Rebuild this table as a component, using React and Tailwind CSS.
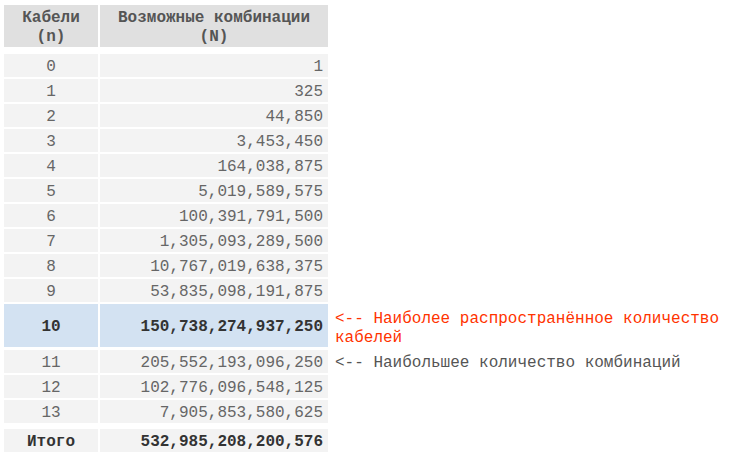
import React from "react";

const rows = [
  ["0", "1"],
  ["1", "325"],
  ["2", "44,850"],
  ["3", "3,453,450"],
  ["4", "164,038,875"],
  ["5", "5,019,589,575"],
  ["6", "100,391,791,500"],
  ["7", "1,305,093,289,500"],
  ["8", "10,767,019,638,375"],
  ["9", "53,835,098,191,875"],
  ["10", "150,738,274,937,250", "hl"],
  ["11", "205,552,193,096,250", "max"],
  ["12", "102,776,096,548,125"],
  ["13", "7,905,853,580,625"],
];

export default function App() {
  return (
    <div
      className="w-[735px] h-[455px] bg-white pt-[5px] pl-[4px] text-[16px] leading-[19px]"
      style={{ fontFamily: '"Liberation Mono", "Courier New", monospace' }}
    >
      <div className="flex flex-col gap-[2px]">
        <div className="flex gap-[2px] mb-[5px]">
          <div className="w-[94px] h-[42px] pt-[4px] bg-[#e0e0e0] flex flex-col items-center justify-center font-bold text-[#555]">
            <span>Кабели</span>
            <span>(n)</span>
          </div>
          <div className="w-[228px] h-[42px] pt-[4px] bg-[#e0e0e0] flex flex-col items-center justify-center font-bold text-[#555]">
            <span>Возможные комбинации</span>
            <span>(N)</span>
          </div>
        </div>
        {rows.map(([n, v, t]) => {
          const hl = t === "hl";
          return (
            <div key={n} className="flex gap-[2px]">
              <div
                className={
                  hl
                    ? "w-[94px] h-[43px] pt-[3px] bg-[#d3e2f2] flex items-center justify-center font-bold text-[#333]"
                    : "w-[94px] h-[23px] pt-[3px] bg-[#f3f3f3] flex items-center justify-center text-[#666]"
                }
              >
                {n}
              </div>
              <div
                className={
                  hl
                    ? "w-[228px] h-[43px] pt-[3px] bg-[#d3e2f2] flex items-center justify-end pr-[5px] font-bold text-[#333]"
                    : "w-[228px] h-[23px] pt-[3px] bg-[#f3f3f3] flex items-center justify-end pr-[5px] text-[#666]"
                }
              >
                {v}
              </div>
              {hl && (
                <div className="w-[400px] pl-[5px] pt-[6px] text-[#ff3300]">
                  &lt;-- Наиболее распространённое количество кабелей
                </div>
              )}
              {t === "max" && (
                <div className="pl-[5px] pt-[3px] flex items-center text-[#555]">
                  &lt;-- Наибольшее количество комбинаций
                </div>
              )}
            </div>
          );
        })}
        <div className="flex gap-[2px] mt-[4px]">
          <div className="w-[94px] h-[23px] pt-[3px] bg-[#f3f3f3] flex items-center justify-center font-bold text-[#333]">
            Итого
          </div>
          <div className="w-[228px] h-[23px] pt-[3px] bg-[#f3f3f3] flex items-center justify-end pr-[5px] font-bold text-[#333]">
            532,985,208,200,576
          </div>
        </div>
      </div>
    </div>
  );
}
